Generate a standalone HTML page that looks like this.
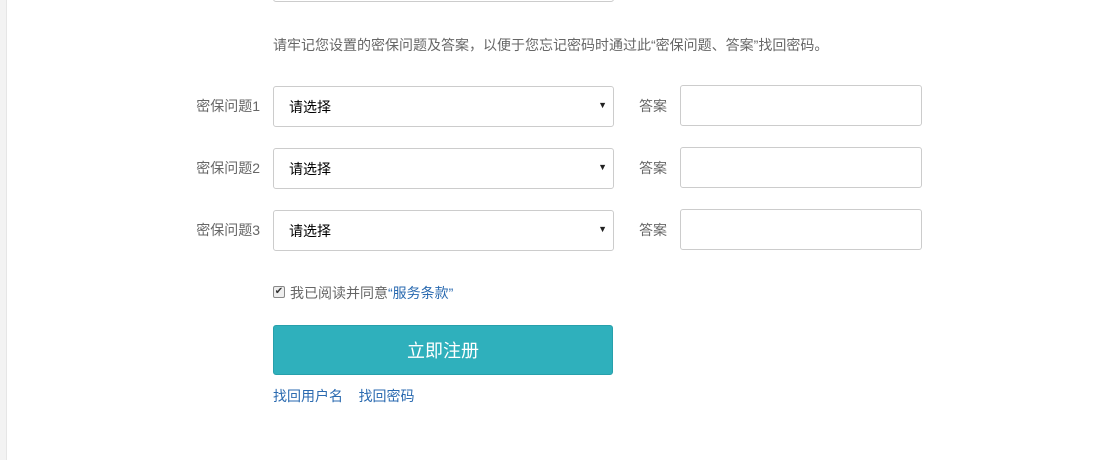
<!DOCTYPE html>
<html><head><meta charset="utf-8"><style>
body{margin:0;width:1100px;height:460px;background:#fff;position:relative;overflow:hidden;font-family:"Liberation Sans","Microsoft YaHei","Noto Sans CJK SC",sans-serif;font-size:14px;color:#666}
.strip{position:absolute;left:0;top:0;width:6px;height:460px;background:#f3f3f3;border-right:1px solid #e6e6e6}
.a{position:absolute}
.box{position:absolute;border:1px solid #ccc;border-radius:3px;background:#fff;box-sizing:border-box}
.sel{width:341px;height:41px;left:273px}
.sel span{position:absolute;left:15px;top:10px;color:#000;font-size:14px}
.sel i{position:absolute;right:6px;top:13px;font-style:normal;color:#222;font-size:9px}
.ans{left:680px;width:242px;height:41px}
.lbl{position:absolute;width:80px;left:180px;text-align:right}
.al{position:absolute;left:639px}
a{color:#2a6ab0;text-decoration:none}
</style></head><body>
<div class="strip"></div>
<div class="box" style="left:273px;top:-20px;width:341px;height:22px"></div>
<div class="a" style="left:273px;top:35px">请牢记您设置的密保问题及答案，以便于您忘记密码时通过此“密保问题、答案”找回密码。</div>

<div class="lbl" style="top:96px">密保问题1</div>
<div class="box sel" style="top:86px"><span>请选择</span><i>▼</i></div>
<div class="al" style="top:96px">答案</div>
<div class="box ans" style="top:85px"></div>

<div class="lbl" style="top:158px">密保问题2</div>
<div class="box sel" style="top:148px"><span>请选择</span><i>▼</i></div>
<div class="al" style="top:158px">答案</div>
<div class="box ans" style="top:147px"></div>

<div class="lbl" style="top:220px">密保问题3</div>
<div class="box sel" style="top:210px"><span>请选择</span><i>▼</i></div>
<div class="al" style="top:220px">答案</div>
<div class="box ans" style="top:209px"></div>

<div class="a" style="left:273px;top:286px;width:10px;height:10px;border:1px solid #888;border-radius:2px;background:#eee;font-size:10px;line-height:10px;text-align:center;color:#333">✔</div>
<div class="a" style="left:290px;top:283px">我已阅读并同意<a>“服务条款”</a></div>

<div class="a" style="left:273px;top:325px;width:340px;height:50px;background:#2fb0bc;border:1px solid #27a0ab;box-sizing:border-box;border-radius:3px;color:#fff;font-size:18px;text-align:center;line-height:50px">立即注册</div>
<div class="a" style="left:273px;top:386px"><a>找回用户名</a>&nbsp;&nbsp;&nbsp;&nbsp;<a>找回密码</a></div>
</body></html>
